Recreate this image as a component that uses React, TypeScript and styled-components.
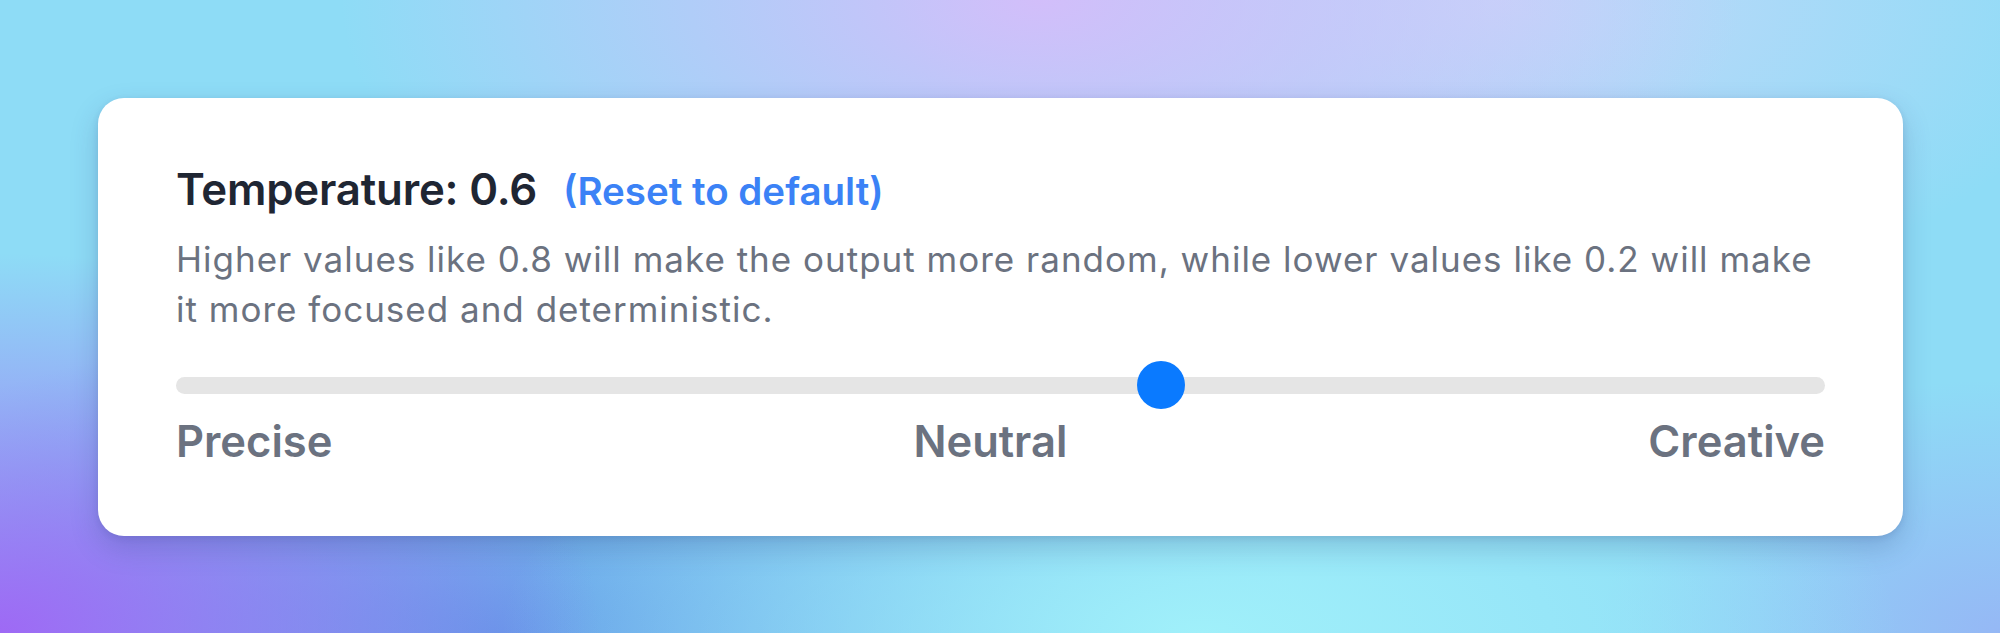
import { useState } from "react";
import styled, { createGlobalStyle } from "styled-components";

const GlobalStyle = createGlobalStyle`
  html, body {
    margin: 0;
    padding: 0;
  }
  body {
    font-family: Inter, "Noto Sans", "Liberation Sans", sans-serif;
    -webkit-font-smoothing: antialiased;
  }
`;

const Page = styled.div`
  height: 633px;
  box-sizing: border-box;
  padding: 98px 97px 0 98px;
  overflow: hidden;
  background:
    radial-gradient(ellipse 30% 60% at 0% 100%, rgba(160, 100, 245, 0.95), rgba(160, 100, 245, 0) 100%),
    radial-gradient(ellipse 35% 55% at 52% 0%, rgba(210, 190, 250, 1), rgba(210, 190, 250, 0) 100%),
    radial-gradient(ellipse 30% 50% at 75% 0%, rgba(200, 215, 250, 0.9), rgba(200, 215, 250, 0) 100%),
    radial-gradient(ellipse 35% 45% at 60% 100%, rgba(160, 240, 250, 1), rgba(160, 240, 250, 0) 100%),
    radial-gradient(ellipse 40% 50% at 25% 100%, rgba(95, 150, 230, 0.9), rgba(95, 150, 230, 0) 100%),
    radial-gradient(ellipse 20% 40% at 100% 100%, rgba(150, 180, 245, 0.9), rgba(150, 180, 245, 0) 100%),
    #8edcf6;
`;

const Card = styled.div`
  background: #ffffff;
  border-radius: 26px;
  height: 438px;
  box-sizing: border-box;
  padding: 66px 78px 0 78px;
  box-shadow: 0 12px 28px rgba(40, 60, 120, 0.22), 0 2px 6px rgba(40, 60, 120, 0.12);
  display: flex;
  flex-direction: column;
`;

const Header = styled.div`
  display: flex;
  align-items: baseline;
  gap: 26px;
  line-height: 52px;
`;

const Title = styled.span`
  font-size: 43.8px;
  font-weight: 600;
  color: #1f2633;
  letter-spacing: -0.2px;
`;

const ResetLink = styled.button`
  border: none;
  background: none;
  padding: 0;
  font-family: inherit;
  line-height: inherit;
  font-size: 38.5px;
  font-weight: 600;
  color: #3b82f6;
  cursor: pointer;
`;

const Description = styled.p`
  margin: 17px 0 0 0;
  font-size: 35px;
  letter-spacing: 1px;
  line-height: 50px;
  color: #6b7280;
`;

const SliderRow = styled.div`
  margin-top: 27px;
  height: 48px;
  display: flex;
  align-items: center;
`;

const Range = styled.input`
  -webkit-appearance: none;
  appearance: none;
  width: 100%;
  height: 48px;
  margin: 0;
  background: transparent;
  cursor: pointer;

  &::-webkit-slider-runnable-track {
    height: 17px;
    border-radius: 9px;
    background: #e5e5e5;
  }

  &::-webkit-slider-thumb {
    -webkit-appearance: none;
    appearance: none;
    width: 48px;
    height: 48px;
    margin-top: -15.5px;
    border-radius: 50%;
    background: #0a7aff;
    border: none;
  }

  &:focus {
    outline: none;
  }
`;

const Labels = styled.div`
  display: flex;
  justify-content: space-between;
  margin-top: 6px;
  line-height: 52px;
`;

const Label = styled.span`
  font-size: 43.5px;
  font-weight: 600;
  color: #6b7280;
`;

const DEFAULT_TEMP = 0.6;

export default function App() {
  const [temp, setTemp] = useState(DEFAULT_TEMP);

  return (
    <>
      <GlobalStyle />
      <Page>
        <Card>
          <Header>
            <Title>Temperature: {temp.toFixed(1)}</Title>
            <ResetLink onClick={() => setTemp(DEFAULT_TEMP)}>
              (Reset to default)
            </ResetLink>
          </Header>
          <Description>
            Higher values like 0.8 will make the output more random, while
            lower values like 0.2 will make it more focused and deterministic.
          </Description>
          <SliderRow>
            <Range
              type="range"
              min={0}
              max={1}
              step={0.1}
              value={temp}
              onChange={(e) => setTemp(Number(e.target.value))}
            />
          </SliderRow>
          <Labels>
            <Label>Precise</Label>
            <Label>Neutral</Label>
            <Label>Creative</Label>
          </Labels>
        </Card>
      </Page>
    </>
  );
}
